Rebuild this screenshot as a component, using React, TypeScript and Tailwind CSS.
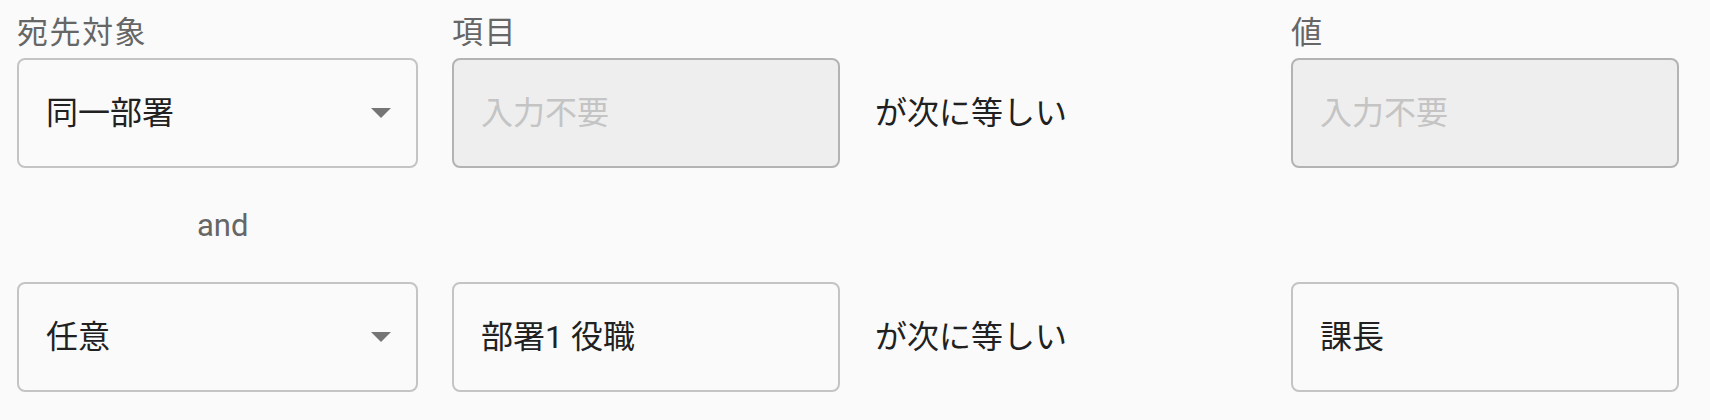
import React from 'react';

const font = { fontFamily: 'Roboto, "Noto Sans CJK JP", sans-serif' };

type Row = {
  target: string;
  item: string | null;
  value: string | null;
};

const rows: Row[] = [
  { target: '同一部署', item: null, value: null },
  { target: '任意', item: '部署1 役職', value: '課長' },
];

function Caret() {
  return (
    <svg width="20" height="10" viewBox="0 0 20 10" className="shrink-0">
      <path d="M0 0 L20 0 L10 10 Z" fill="#757575" />
    </svg>
  );
}

function SelectBox({ value }: { value: string }) {
  return (
    <div className="w-[401px] h-[110px] shrink-0 rounded-[8px] border-2 border-[#c4c4c4] bg-[#fafafa] flex items-center justify-between pl-[27px] pr-[25px]">
      <span className="text-[32px] text-[#212121] leading-none">{value}</span>
      <Caret />
    </div>
  );
}

function InputBox({ value }: { value: string | null }) {
  const disabled = value === null;
  return (
    <div
      className={
        'w-[388px] h-[110px] shrink-0 rounded-[8px] border-2 flex items-center pl-[27px] ' +
        (disabled ? 'bg-[#eeeeee] border-[#b3b3b3]' : 'bg-[#fafafa] border-[#c4c4c4]')
      }
    >
      <span className={'text-[32px] leading-none ' + (disabled ? 'text-[#c4c4c4]' : 'text-[#212121]')}>
        {disabled ? '入力不要' : value}
      </span>
    </div>
  );
}

function Equals() {
  return (
    <div className="w-[383px] shrink-0 flex items-center pl-[1px]">
      <span className="text-[32px] text-[#212121] leading-none">が次に等しい</span>
    </div>
  );
}

export default function App() {
  return (
    <div className="w-[1710px] h-[420px] bg-[#fafafa] pl-[17px] pt-[13px]" style={font}>
      <div className="flex gap-[34px] mb-[5px] text-[31px] tracking-[1.5px] text-[#666666] leading-[40px] h-[40px]">
        <div className="w-[401px]">宛先対象</div>
        <div className="w-[388px]">項目</div>
        <div className="w-[383px]" />
        <div className="w-[388px]">値</div>
      </div>

      {rows.map((row, idx) => (
        <React.Fragment key={idx}>
          {idx > 0 && (
            <div className="h-[114px] flex items-center pl-[180px]">
              <span className="text-[31px] text-[#666666] leading-none">and</span>
            </div>
          )}
          <div className="flex gap-[34px]">
            <SelectBox value={row.target} />
            <InputBox value={row.item} />
            <Equals />
            <InputBox value={row.value} />
          </div>
        </React.Fragment>
      ))}
    </div>
  );
}
